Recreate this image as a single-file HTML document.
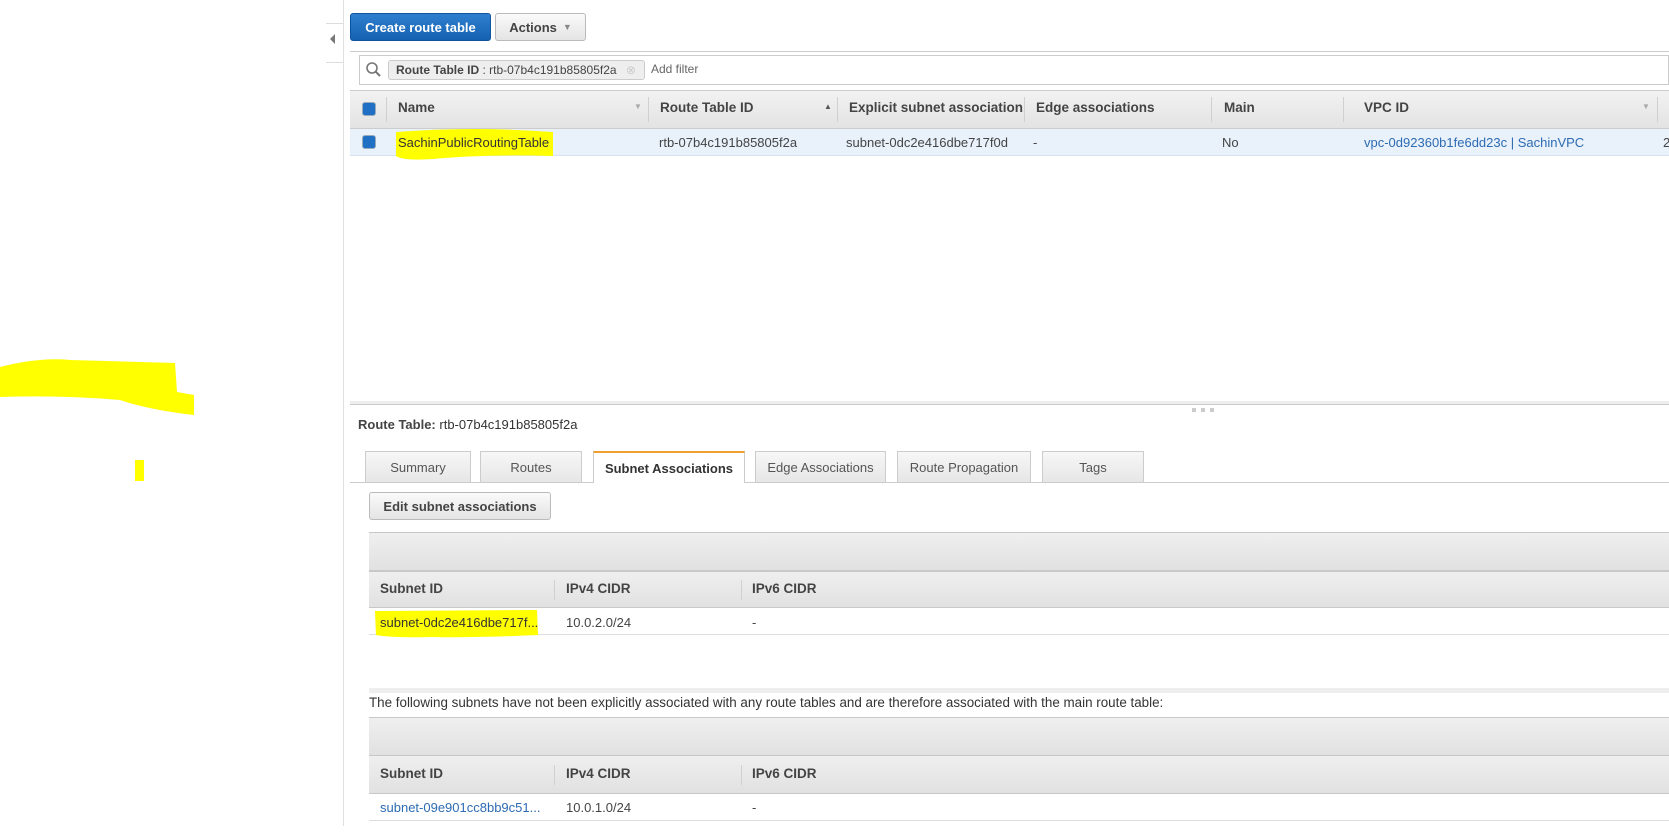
<!DOCTYPE html>
<html><head><meta charset="utf-8"><style>
*{margin:0;padding:0;box-sizing:border-box}
body{width:1669px;height:836px;overflow:hidden;background:#fff;font-family:"Liberation Sans",Arial,sans-serif;font-size:13px;color:#444;position:relative}
.a{position:absolute;white-space:nowrap}
.btn{position:absolute;border:1px solid #bbb;border-radius:3px;background:linear-gradient(#fafafa,#e4e4e4);font-weight:bold;color:#444;display:flex;align-items:center;justify-content:center;font-size:13px}
.hdr{position:absolute;left:369px;right:0;background:linear-gradient(#efefef,#e1e1e1);border-top:1px solid #c8c8c8;border-bottom:1px solid #c8c8c8}
.sep{position:absolute;width:1px;background:#d0d0d0}
.tab{position:absolute;top:451px;height:31px;border:1px solid #ccc;border-bottom:none;background:linear-gradient(#f7f7f7,#e6e6e6);color:#555;display:flex;align-items:center;justify-content:center;font-size:13px}
.link{color:#2d6bb3}
.h{font-weight:bold;font-size:13.5px}
b{color:#444}
</style></head><body>
<svg class="a" style="left:0;top:355px" width="200" height="130">
<path d="M0 12 Q40 2 70 5 L175 8 L177 37 L194 40 L194 60 Q150 55 120 45 Q60 40 0 42 Z" fill="#ff0"/>
<rect x="135" y="105" width="9" height="21" fill="#ff0"/>
</svg>
<div class="a" style="left:343px;top:0;width:1px;height:826px;background:#e0e0e0"></div>
<div class="a" style="left:326px;top:23px;width:17px;height:1px;background:#ddd"></div>
<div class="a" style="left:326px;top:62px;width:17px;height:1px;background:#ddd"></div>
<div class="a" style="left:330px;top:34px;width:0;height:0;border-top:5px solid transparent;border-bottom:5px solid transparent;border-right:5px solid #777"></div>

<div class="btn" style="left:350px;top:13px;width:141px;height:28px;background:linear-gradient(#2f7fd0,#1461b0);border-color:#0f559e;color:#fff">Create route table</div>
<div class="btn" style="left:495px;top:13px;width:91px;height:28px">Actions <span style="font-size:9px;color:#888;margin-left:6px">▼</span></div>

<div class="a" style="left:350px;top:51px;right:0;height:1px;background:#ccc"></div>
<div class="a" style="left:359px;top:55px;right:0;height:30px;border:1px solid #ccc;background:#fff"></div>
<svg class="a" style="left:365px;top:61px" width="18" height="18"><circle cx="7" cy="7" r="5" fill="none" stroke="#777" stroke-width="1.6"/><path d="M10.5 10.5 L15 15" stroke="#777" stroke-width="2"/></svg>
<div class="a" style="left:388px;top:60px;width:257px;height:20px;border:1px solid #ccc;border-radius:3px;background:#eee;line-height:18px;padding-left:7px;font-size:12px;color:#444"><b>Route Table ID</b> : rtb-07b4c191b85805f2a <span style="color:#ccc;margin-left:6px">⊗</span></div>
<div class="a" style="left:651px;top:62px;color:#666;font-size:12px">Add filter</div>

<div class="a" style="left:350px;top:90px;right:0;height:39px;background:linear-gradient(#f2f2f2,#e3e3e3);border-top:1px solid #ccc;border-bottom:1px solid #ccc"></div>
<div class="a" style="left:350px;top:129px;right:0;height:27px;background:#e9f1fb;border-bottom:1px solid #d8e2ee"></div>
<div class="a" style="left:362px;top:102px;width:14px;height:14px;border-radius:3px;background:#1f6fc5;border:1px solid #9ab"></div>
<div class="a" style="left:362px;top:135px;width:14px;height:14px;border-radius:3px;background:#1f6fc5;border:1px solid #9ab"></div>
<div class="sep" style="left:386px;top:97px;height:25px"></div>
<div class="a h" style="left:398px;top:100px">Name</div>
<div class="a" style="left:634px;top:102px;font-size:8px;color:#aaa">▼</div>
<div class="sep" style="left:648px;top:97px;height:25px"></div>
<div class="a h" style="left:660px;top:100px">Route Table ID</div>
<div class="a" style="left:824px;top:102px;font-size:8px;color:#555">▲</div>
<div class="sep" style="left:837px;top:97px;height:25px"></div>
<div class="a h" style="left:849px;top:100px;width:174px;overflow:hidden">Explicit subnet association</div>
<div class="sep" style="left:1024px;top:97px;height:25px"></div>
<div class="a h" style="left:1036px;top:100px">Edge associations</div>
<div class="sep" style="left:1211px;top:97px;height:25px"></div>
<div class="a h" style="left:1224px;top:100px">Main</div>
<div class="sep" style="left:1343px;top:97px;height:25px"></div>
<div class="a h" style="left:1364px;top:100px">VPC ID</div>
<div class="a" style="left:1642px;top:102px;font-size:8px;color:#aaa">▼</div>
<div class="sep" style="left:1657px;top:97px;height:25px"></div>
<svg class="a" style="left:393px;top:128px" width="165" height="34"><path d="M3 4 Q80 -2 160 4 L160 28 Q90 26 40 31 Q10 33 3 28 Z" fill="#ff0"/></svg>
<div class="a" style="left:398px;top:135px;color:#333">SachinPublicRoutingTable</div>
<div class="a" style="left:659px;top:135px">rtb-07b4c191b85805f2a</div>
<div class="a" style="left:846px;top:135px">subnet-0dc2e416dbe717f0d</div>
<div class="a" style="left:1033px;top:135px">-</div>
<div class="a" style="left:1222px;top:135px">No</div>
<div class="a link" style="left:1364px;top:135px">vpc-0d92360b1fe6dd23c | SachinVPC</div>
<div class="a" style="left:1663px;top:135px">2</div>

<div class="a" style="left:350px;top:401px;right:0;height:4px;background:#eee;border-bottom:1px solid #ccc"></div>
<div class="a" style="left:1192px;top:408px;width:24px;height:4px;background:repeating-linear-gradient(90deg,#ccc 0 4px,transparent 4px 9px)"></div>

<div class="a" style="left:358px;top:417px;color:#333"><b>Route Table:</b> rtb-07b4c191b85805f2a</div>

<div class="a" style="left:350px;top:482px;right:0;height:1px;background:#ccc"></div>
<div class="tab" style="left:365px;width:106px">Summary</div>
<div class="tab" style="left:480px;width:102px">Routes</div>
<div class="tab" style="left:593px;width:152px;height:32px;background:#fff;border-top:2px solid #f0a030;font-weight:bold;color:#333">Subnet Associations</div>
<div class="tab" style="left:755px;width:131px">Edge Associations</div>
<div class="tab" style="left:897px;width:134px">Route Propagation</div>
<div class="tab" style="left:1042px;width:102px">Tags</div>

<div class="btn" style="left:369px;top:492px;width:182px;height:28px">Edit subnet associations</div>

<div class="hdr" style="top:532px;height:39px"></div>
<div class="hdr" style="top:571px;height:37px"></div>
<div class="sep" style="left:554px;top:580px;height:20px"></div>
<div class="sep" style="left:741px;top:580px;height:20px"></div>
<div class="a h" style="left:380px;top:581px">Subnet ID</div>
<div class="a h" style="left:566px;top:581px">IPv4 CIDR</div>
<div class="a h" style="left:752px;top:581px">IPv6 CIDR</div>
<div class="a" style="left:369px;top:634px;right:0;height:1px;background:#ddd"></div>
<svg class="a" style="left:372px;top:608px" width="170" height="32"><path d="M3 3 L165 2 L166 27 Q100 30 60 29 Q20 30 4 27 Z" fill="#ff0"/></svg>
<div class="a" style="left:380px;top:615px;color:#333">subnet-0dc2e416dbe717f...</div>
<div class="a" style="left:566px;top:615px">10.0.2.0/24</div>
<div class="a" style="left:752px;top:615px">-</div>

<div class="a" style="left:369px;top:688px;right:0;height:5px;background:#eee"></div>
<div class="a" style="left:369px;top:695px;color:#333;font-size:13.4px">The following subnets have not been explicitly associated with any route tables and are therefore associated with the main route table:</div>

<div class="hdr" style="top:717px;height:39px"></div>
<div class="hdr" style="top:755px;height:39px"></div>
<div class="sep" style="left:554px;top:765px;height:20px"></div>
<div class="sep" style="left:741px;top:765px;height:20px"></div>
<div class="a h" style="left:380px;top:766px">Subnet ID</div>
<div class="a h" style="left:566px;top:766px">IPv4 CIDR</div>
<div class="a h" style="left:752px;top:766px">IPv6 CIDR</div>
<div class="a link" style="left:380px;top:800px">subnet-09e901cc8bb9c51...</div>
<div class="a" style="left:566px;top:800px">10.0.1.0/24</div>
<div class="a" style="left:752px;top:800px">-</div>
<div class="a" style="left:369px;top:820px;right:0;height:1px;background:#ddd"></div>
</body></html>
